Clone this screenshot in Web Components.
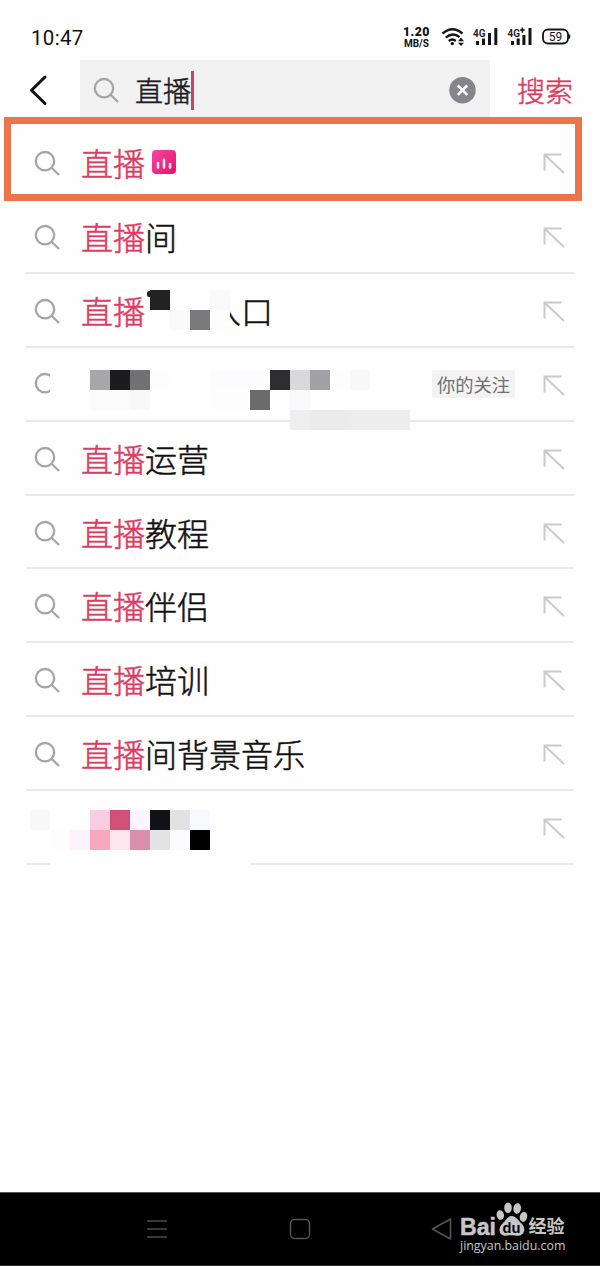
<!DOCTYPE html>
<html lang="zh-CN">
<head>
<meta charset="utf-8">
<title>搜索</title>
<style>
  html, body { margin: 0; }
  body {
    width: 600px; height: 1266px; overflow: hidden;
    background: #fefefe; color: #111;
    font-family: "Noto Sans CJK SC", sans-serif;
    --accent: #dc3b62;
    --line: #e9e9e9;
  }
</style>
</head>
<body>
<search-page></search-page>

<script>
(() => {
  const define = (name, html, setup) => {
    const tpl = document.createElement('template');
    tpl.innerHTML = html;
    customElements.define(name, class extends HTMLElement {
      constructor(){
        super();
        this.attachShadow({mode:'open'}).appendChild(tpl.content.cloneNode(true));
      }
      connectedCallback(){
        if (setup) setup(this, this.shadowRoot);
      }
    });
  };

  define('search-icon', `
    <style>
      :host{ display:block; width:27px; height:27px; flex:none; }
      svg{ display:block; }
    </style>
    <svg width="27" height="27" viewBox="0 0 27 27" fill="none" stroke="#a5a5a5" stroke-width="2.3">
      <circle cx="11" cy="11.2" r="9.2"/><path d="M17.6 17.8L25 25"/>
    </svg>
  `);

  define('fill-arrow', `
    <style>
      :host{ display:block; width:22px; height:21px; flex:none; }
      svg{ display:block; }
    </style>
    <svg width="22" height="21" viewBox="0 0 22 21" fill="none" stroke="#cacaca" stroke-width="2">
      <path d="M1.5 17.5V1.5H18.5M1.5 1.5L21 20"/>
    </svg>
  `);

  // censored area: rows split by "/", cells by spaces, "-" leaves a cell clear
  define('mosaic-block', `
    <style>
      :host{ display:grid; grid-auto-rows:20px; position:absolute; }
    </style>
  `, (el, root) => {
    const rows = el.getAttribute('cells').split('/').map(r => r.trim().split(/\s+/));
    const cols = Math.max(...rows.map(r => r.length));
    el.style.gridTemplateColumns = `repeat(${cols}, 20px)`;
    el.style.left = el.getAttribute('x') + 'px';
    el.style.top = el.getAttribute('y') + 'px';
    rows.forEach((row, y) => row.forEach((c, x) => {
      if (c === '-') return;
      const cell = document.createElement('div');
      cell.style.background = c === 'w' ? '#fefefe' : '#' + c;
      cell.style.gridArea = `${y+1} / ${x+1}`;
      root.appendChild(cell);
    }));
  });

  define('status-bar', `
    <style>
      :host{
        display:flex; align-items:center; height:60px; padding:16px 29px 0 31px;
        box-sizing:border-box; font-family:Roboto, sans-serif; color:#111;
      }
      .time{ font-size:20.5px; letter-spacing:.3px; flex:1; }
      .net{ display:flex; flex-direction:column; align-items:center; margin:-2px 11px 0 0; font-weight:700; }
      .net b{ font-size:12.3px; line-height:12px; letter-spacing:.5px; }
      .net span{ font-size:10px; line-height:11px; }
      svg{ display:block; margin-top:-2px; }
      text{ font-family:Roboto, sans-serif; }
    </style>
    <div class="time">10:47</div>
    <div class="net"><b>1.20</b><span>MB/S</span></div>
    <svg width="130" height="22" viewBox="441 26 130 22" fill="none" stroke="#151515">
      <g stroke-width="2.4">
        <path d="M442.5 33.5Q452.5 24.8 462.5 33.5"/>
        <path d="M445.8 37.6Q452.5 31.8 459.5 37"/>
        <path d="M448.8 41Q452.3 38 455.8 41"/>
      </g>
      <g fill="#151515" stroke="none">
        <circle cx="452.3" cy="43.6" r="1.7"/>
        <path d="M458 41.3L461 37.6L464 41.3ZM458 42.8H464L461 46Z"/>
        <text x="473" y="36.5" font-size="10.5" font-weight="600" textLength="12.5" lengthAdjust="spacingAndGlyphs">4G</text>
        <path d="M476 41h3v4h-3zM482 38.5h3v6.5h-3zM488 33h3v12h-3zM494.3 28h3v17h-3z"/>
        <text x="507.5" y="36.5" font-size="10.5" font-weight="600" textLength="12.5" lengthAdjust="spacingAndGlyphs">4G</text>
        <path d="M520 29.2h1.6v-1.7h1.6v1.7h1.6v1.6h-1.6v1.9h-1.6v-1.9h-1.6z"/>
        <path d="M511 41h3v4h-3zM516.7 38.5h3v6.5h-3zM522.4 35h3v10h-3zM528.5 28h3v17h-3z"/>
      </g>
      <rect x="543" y="29.5" width="25" height="14" rx="5" fill="#fff" stroke-width="1.8"/>
      <path d="M569.2 34.5v4" stroke-width="2"/>
      <text x="555.5" y="40.7" text-anchor="middle" font-size="12" fill="#151515" stroke="none">59</text>
    </svg>
  `);

  define('search-bar', `
    <style>
      :host{ display:flex; align-items:center; height:60px; padding:0 26px 0 29px; }
      .back{ width:51px; flex:none; }
      .field{
        display:flex; align-items:center; flex:1; height:60px; padding:0 14px 0 13px;
        background:#f1f1f2; box-sizing:border-box;
      }
      .q, .go{ font-size:28px; line-height:40px; font-weight:300; -webkit-text-stroke:.5px; }
      .q{ margin-left:15px; color:#1b1b22; }
      .caret{ width:3px; height:39px; background:#d2405f; }
      .clear{ margin-left:auto; }
      .go{ color:var(--accent); margin-left:27px; margin-right:1px; }
      svg{ display:block; }
    </style>
    <div class="back">
      <svg width="20" height="32" viewBox="0 0 20 32" fill="none" stroke="#101014" stroke-width="3" stroke-linecap="round" stroke-linejoin="round">
        <path d="M16 3L2.5 16.2L16 29.5"/>
      </svg>
    </div>
    <div class="field">
      <search-icon></search-icon>
      <span class="q"><slot></slot></span>
      <i class="caret"></i>
      <svg class="clear" width="27" height="27" viewBox="0 0 27 27">
        <circle cx="13.5" cy="13.2" r="13.2" fill="#85858a"/>
        <path d="M8.8 8.5L18.2 17.9M18.2 8.5L8.8 17.9" stroke="#fff" stroke-width="2.7"/>
      </svg>
    </div>
    <span class="go">搜索</span>
  `);

  define('live-badge', `
    <style>:host{ display:block; margin-left:7px; } svg{ display:block; }</style>
    <svg width="24" height="24" viewBox="0 0 24 24">
      <defs><linearGradient id="g" x1="0" y1="0" x2="1" y2="1">
        <stop offset="0" stop-color="#f547a5"/><stop offset="1" stop-color="#e51367"/>
      </linearGradient></defs>
      <rect width="24" height="24" rx="4" fill="url(#g)"/>
      <path d="M6 13V17.5M12 9.8V17.5M18 14V17.5" stroke="#ffe4f2" stroke-width="2.6" stroke-linecap="round"/>
    </svg>
  `);

  define('suggest-row', `
    <style>
      :host{
        display:flex; align-items:center; position:relative; box-sizing:border-box;
        height:73.85px; margin:0 26px; padding:3px 9px 0 8px;
        border-bottom:2px solid var(--line);
      }
      .text{
        display:flex; align-items:center; flex:1; margin-left:20px; padding-bottom:3px;
        font-size:32px; line-height:48px; white-space:nowrap; font-weight:300;
        -webkit-text-stroke:.5px;
      }
      em{ font-style:normal; color:var(--accent); }
      :host([blank]) search-icon{ visibility:hidden; }
    </style>
    <search-icon></search-icon>
    <div class="text"><em></em><slot></slot></div>
    <slot name="tag"></slot>
    <fill-arrow></fill-arrow>
    <slot name="cover"></slot>
  `, (el, root) => {
    root.querySelector('em').textContent =
      el.hasAttribute('blank') || el.hasAttribute('nokey') ? '' : '直播';
  });

  define('follow-tag', `
    <style>
      :host{
        display:block; padding:0 5px; margin:0 28px 2px 0; background:#f3f3f3;
        border-radius:2px; font-size:18.3px; line-height:28px; color:#707070;
      }
    </style>
    <slot></slot>
  `);

  define('nav-bar', `
    <style>
      :host{
        display:flex; align-items:center; box-sizing:border-box;
        height:74px; padding:0 33px 0 146px; background:#000;
        border-top:1px solid #555; border-bottom:1px solid #333;
      }
      svg{ display:block; flex:none; }
      .home{ margin-left:121px; }
      .back{ margin-left:120px; }
      .wm{ margin-left:6px; color:#c6c6c6; margin-top:-4px; }
      .url{ font:500 12.4px/16px "Open Sans", sans-serif; display:block; white-space:nowrap; margin-left:1px; }
    </style>
    <svg width="22" height="20" viewBox="0 0 22 20" stroke="#4c4c4c" stroke-width="1.3">
      <path d="M1 2H21M1 10H21M1 18H21"/>
    </svg>
    <svg class="home" width="22" height="22" viewBox="0 0 22 22" fill="none" stroke="#555" stroke-width="1.5">
      <rect x="1.5" y="1.5" width="19" height="19" rx="4"/>
    </svg>
    <svg class="back" width="22" height="24" viewBox="0 0 22 24" fill="none" stroke="#555" stroke-width="1.6" stroke-linejoin="round">
      <path d="M1.5 12L19.5 2V22Z"/>
    </svg>
    <div class="wm">
      <svg width="108" height="37" viewBox="459 1200.5 108 37" fill="#c6c6c6" overflow="visible">
        <text x="460" y="1234" font-family="Liberation Sans" font-size="24" font-weight="700" textLength="36" lengthAdjust="spacingAndGlyphs" stroke="#c6c6c6" stroke-width=".5">Bai</text>
        <ellipse cx="500.3" cy="1214.5" rx="3.7" ry="4.9" transform="rotate(-12 500.3 1214.5)"/>
        <ellipse cx="508" cy="1207.3" rx="3.8" ry="5.3"/>
        <ellipse cx="517.2" cy="1208" rx="3.8" ry="5.3" transform="rotate(10 517.2 1208)"/>
        <ellipse cx="523.5" cy="1216.3" rx="3.7" ry="5" transform="rotate(15 523.5 1216.3)"/>
        <path d="M511.5 1215.5C516 1215.5 518 1220 521.5 1223C526 1227 525 1235 518.5 1235.2C515.5 1235.4 514 1234.7 511.5 1234.7C509 1234.7 507 1235.5 504.5 1235.2C498.5 1234.5 498 1227 502.5 1223C506 1220 507.5 1215.5 511.5 1215.5Z"/>
        <text x="502.5" y="1232.7" font-family="Liberation Sans" font-size="15" font-weight="700" fill="#000" textLength="18" lengthAdjust="spacingAndGlyphs">du</text>
        <text x="528.5" y="1232.8" font-family="Noto Sans CJK SC" font-size="18" font-weight="700">经验</text>
      </svg>
      <span class="url">jingyan.baidu.com</span>
    </div>
  `);

  define('search-page', `
    <style>
      :host{ display:flex; flex-direction:column; height:1266px; position:relative; }
      .list{ flex:1; padding-top:6.4px; }
      .mark{
        position:absolute; left:4px; top:117px; width:578px; height:84px;
        box-sizing:border-box; border:7px solid #ec744a;
      }
      .gap{ width:64px; }
      .gap::before{
        content:""; display:block; width:3px; height:6px; margin:-19px 0 0 2px;
        background:#222; border-radius:2px 0 0 2px;
      }
    </style>
    <status-bar></status-bar>
    <search-bar>直播</search-bar>
    <div class="list">
      <suggest-row><live-badge></live-badge></suggest-row>
      <suggest-row>间</suggest-row>
      <suggest-row>
        <span class="gap"></span>入口
        <mosaic-block slot="cover" x="124" y="15.9" cells="222222 w w fafafa / w fafafa 7a797b fdfdfd"></mosaic-block>
      </suggest-row>
      <suggest-row nokey>
        <follow-tag slot="tag">你的关注</follow-tag>
        <mosaic-block slot="cover" x="24" y="22.05" cells="w w a7a7a9 1c1c1e 717173 fdfdfd w w fcfcff fcfcff fcfcff 2e2e30 d9d9db a1a1a5 fdfdfd f8f8f8 / w w fbfbfb fbfbfb f8f8f8 w w w fdfdfd fdfdfd 6b6b6b w fafafd w w w / - - - - - - - - - - - - eeeeee ececec ececec ededed ededed ededed"></mosaic-block>
      </suggest-row>
      <suggest-row>运营</suggest-row>
      <suggest-row>教程</suggest-row>
      <suggest-row>伴侣</suggest-row>
      <suggest-row>培训</suggest-row>
      <suggest-row>间背景音乐</suggest-row>
      <suggest-row blank>
        <mosaic-block slot="cover" x="4" y="18.95" cells="f8f8f8 w w fbcde0 d05078 fff5ff 111116 e2e2e3 f6faff w w / w fdfdfd fef3fb f8a8be fee6ee d98fa9 e3e3e5 fcfcfe 000000 w w / - w w w w w w w w w w"></mosaic-block>
      </suggest-row>
    </div>
    <nav-bar></nav-bar>
    <div class="mark"></div>
  `);
})();
</script>
</body>
</html>
